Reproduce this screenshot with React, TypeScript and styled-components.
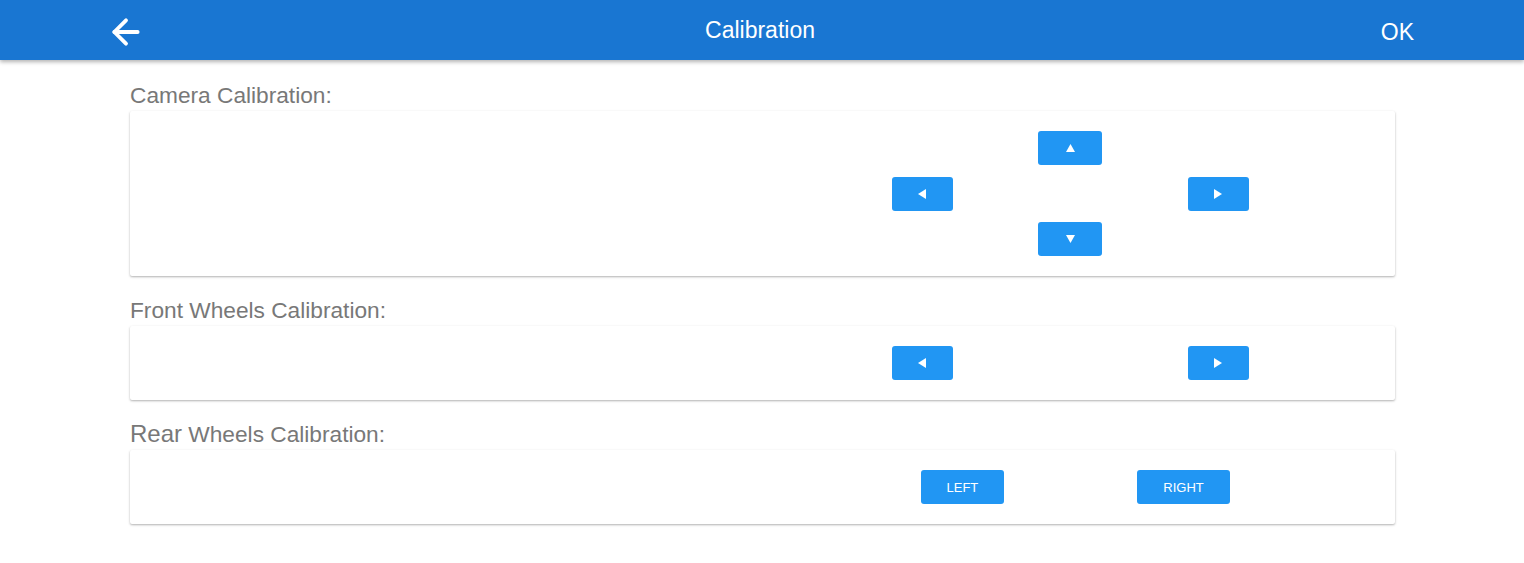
import React from "react";
import styled, { createGlobalStyle } from "styled-components";

const GlobalStyle = createGlobalStyle`
  html, body {
    margin: 0;
    padding: 0;
    background: #ffffff;
    font-family: "Liberation Sans", Arial, sans-serif;
  }
`;

const Page = styled.div`
  width: 1524px;
  min-height: 563px;
  background: #ffffff;
`;

const AppBar = styled.header`
  height: 60px;
  background-color: #1976d2;
  color: #ffffff;
  display: grid;
  grid-template-columns: 1fr auto 1fr;
  align-items: center;
  padding: 0 110px 0 106px;
  box-shadow: 0 2px 4px rgba(0, 0, 0, 0.3);
  position: relative;
  z-index: 1;
  .back {
    justify-self: start;
    display: flex;
    margin-top: 4px;
  }
  h1 {
    margin: 0;
    font-size: 23px;
    font-weight: normal;
    margin-top: 1px;
  }
  .ok {
    justify-self: end;
    font-size: 23px;
    margin-top: 4px;
  }
`;

const Content = styled.main`
  display: flex;
  flex-direction: column;
  gap: 18px;
  padding: 19px 129px 0 130px;
`;

const Section = styled.section`
  display: flex;
  flex-direction: column;
`;

const Label = styled.div`
  height: 32px;
  line-height: 32px;
  font-size: 22.7px;
  color: #787878;
  white-space: nowrap;
  .big {
    font-size: 24px;
  }
`;

const Card = styled.div`
  background: #ffffff;
  box-shadow: 0 1px 3px rgba(0, 0, 0, 0.12), 0 1px 2px rgba(0, 0, 0, 0.2);
  border-radius: 2px;
  display: grid;
  grid-template-columns: 1fr 1fr;
  padding: 20px 0;
`;

const Controls = styled.div<{ $offset: number }>`
  grid-column: 2;
  padding-left: ${(p) => p.$offset}px;
  display: flex;
  align-items: center;
`;

const Pad = styled.div`
  display: grid;
  grid-template-columns: 61px 235px 61px;
  grid-template-rows: 34px 34px 34px;
  row-gap: 11.5px;
  justify-items: center;
  .up {
    grid-column: 2;
    grid-row: 1;
  }
  .left {
    grid-column: 1;
    grid-row: 2;
  }
  .right {
    grid-column: 3;
    grid-row: 2;
  }
  .down {
    grid-column: 2;
    grid-row: 3;
  }
`;

const Pair = styled.div<{ $gap: number }>`
  display: flex;
  gap: ${(p) => p.$gap}px;
`;

const Button = styled.button<{ $w?: number }>`
  height: 34px;
  width: ${(p) => (p.$w ? `${p.$w}px` : "auto")};
  padding: ${(p) => (p.$w ? "0" : "0 26px")};
  border: none;
  border-radius: 3px;
  background-color: #2196f3;
  color: #ffffff;
  font-family: "Liberation Sans", Arial, sans-serif;
  font-size: 13px;
  text-transform: uppercase;
  display: flex;
  align-items: center;
  justify-content: center;
  cursor: pointer;
`;

type Dir = "up" | "down" | "left" | "right";

const triangles: Record<Dir, string> = {
  up: "4.5,0 9,8 0,8",
  down: "0,0 9,0 4.5,8",
  left: "8,0 8,10 0,5",
  right: "0,0 8,5 0,10",
};

const Triangle = ({ dir }: { dir: Dir }) => {
  const vertical = dir === "up" || dir === "down";
  return (
    <svg
      width={vertical ? 9 : 8}
      height={vertical ? 8 : 10}
      viewBox={vertical ? "0 0 9 8" : "0 0 8 10"}
    >
      <polygon points={triangles[dir]} fill='#ffffff' />
    </svg>
  );
};

const ArrowButton = ({ dir, w }: { dir: Dir; w: number }) => (
  <Button className={dir} $w={w}>
    <Triangle dir={dir} />
  </Button>
);

const App = () => {
  return (
    <Page>
      <GlobalStyle />
      <AppBar>
        <span className='back'>
          <svg
            width='40'
            height='40'
            viewBox='0 0 24 24'
            fill='none'
            stroke='#ffffff'
            strokeWidth='2.3'
            strokeLinecap='round'
            strokeLinejoin='round'
          >
            <path d='m12 19-7-7 7-7' />
            <path d='M19 12H5' />
          </svg>
        </span>
        <h1>Calibration</h1>
        <span className='ok'>OK</span>
      </AppBar>

      <Content>
        <Section>
          <Label>Camera Calibration:</Label>
          <Card>
            <Controls $offset={129}>
              <Pad>
                <ArrowButton dir='up' w={64} />
                <ArrowButton dir='left' w={61} />
                <ArrowButton dir='right' w={61} />
                <ArrowButton dir='down' w={64} />
              </Pad>
            </Controls>
          </Card>
        </Section>

        <Section>
          <Label>Front Wheels Calibration:</Label>
          <Card>
            <Controls $offset={129}>
              <Pair $gap={235}>
                <ArrowButton dir='left' w={61} />
                <ArrowButton dir='right' w={61} />
              </Pair>
            </Controls>
          </Card>
        </Section>

        <Section>
          <Label>
            <span className='big'>Rear</span> Wheels Calibration:
          </Label>
          <Card>
            <Controls $offset={158}>
              <Pair $gap={133}>
                <Button>Left</Button>
                <Button>Right</Button>
              </Pair>
            </Controls>
          </Card>
        </Section>
      </Content>
    </Page>
  );
};

export default App;
